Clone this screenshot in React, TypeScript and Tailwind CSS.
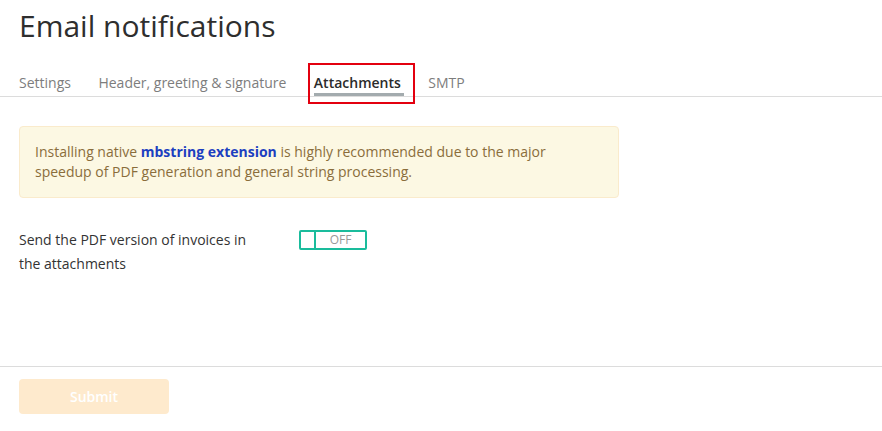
import React from 'react';

const tabs = ['Settings', 'Header, greeting & signature', 'Attachments', 'SMTP'];

export default function App() {
  const active = 'Attachments';

  return (
    <div className="min-h-screen w-full bg-white text-[#333] font-['Open_Sans',sans-serif]">
      {/* Title */}
      <div className="px-[19px] pt-[6px]">
        <h1 className="text-[30px] leading-[40px] font-normal text-[#2e2e2e]">Email notifications</h1>
      </div>

      {/* Tabs */}
      <div className="mt-[27px] border-b border-[#dcdcdc]">
        <ul className="flex gap-[27.5px] px-[19px]">
          {tabs.map((t) => (
            <li key={t} className="relative pb-[3px]">
              <span
                className={
                  t === active
                    ? 'block text-[14px] leading-[20px] font-semibold text-[#2b2b2b]'
                    : 'block text-[14px] leading-[20px] text-[#7d7d7d]'
                }
              >
                {t}
              </span>
              {t === active && (
                <>
                  <span className="absolute left-0 right-[-3px] bottom-0 h-[3px] bg-[#a3abae]" />
                  <span className="absolute left-[-6px] right-[-14px] top-[-10px] bottom-[-8px] border-2 border-[#e3000f]" />
                </>
              )}
            </li>
          ))}
        </ul>
      </div>

      {/* Warning */}
      <div className="px-[19px] pt-[29px]">
        <div className="w-[600px] rounded-[4px] border border-[#faebcc] bg-[#fcf8e3] px-[15px] py-[15px] text-[14px] leading-[20px] text-[#8a6d3b]">
          Installing native <a className="font-bold text-[#1c3fc0]">mbstring extension</a> is highly recommended due to the major
          speedup of PDF generation and general string processing.
        </div>
      </div>

      {/* Option row */}
      <div className="flex px-[19px] pt-[30px]">
        <div className="w-[240px] text-[14px] leading-[24px] text-[#333]">
          Send the PDF version of invoices in the attachments
        </div>
        <div className="ml-[40px] mt-[2px]">
          <div className="flex h-[20px] w-[68px] rounded-[2px] border-2 border-[#1abc9c]">
            <div className="w-[15px] border-r-2 border-[#1abc9c]" />
            <div className="flex flex-1 items-center justify-center text-[12px] leading-none text-[#999]">OFF</div>
          </div>
        </div>
      </div>

      {/* Footer */}
      <div className="mt-[90px] border-t border-[#dcdcdc] px-[19px] pt-[12px]">
        <button className="h-[35px] w-[150px] rounded-[4px] bg-[#feeacd] text-[14px] font-semibold text-white">
          Submit
        </button>
      </div>
    </div>
  );
}
